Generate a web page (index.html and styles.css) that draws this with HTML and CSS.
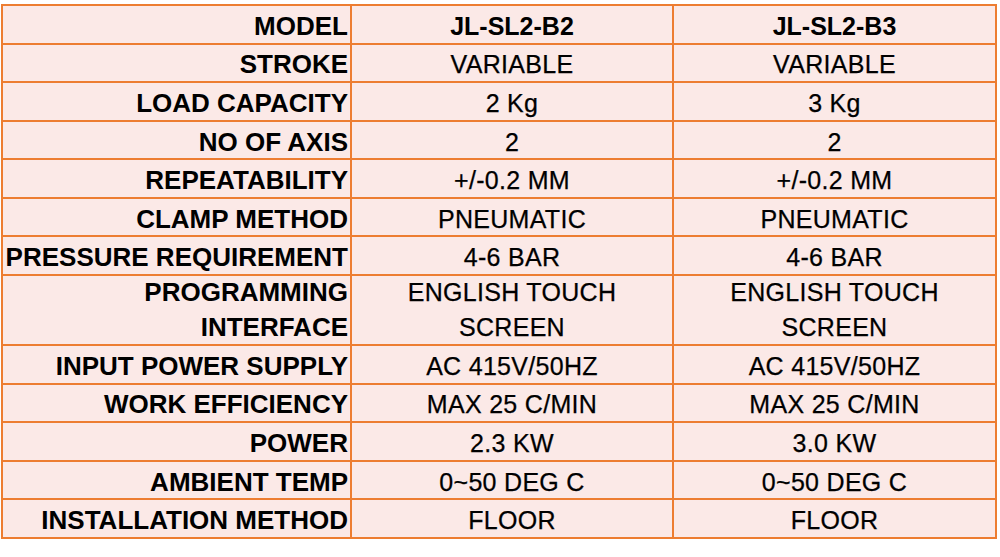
FILE: index.html
```html
<!DOCTYPE html>
<html lang="en">
<head>
<meta charset="utf-8">
<title>Specifications</title>
<link rel="stylesheet" href="styles.css">
</head>
<body>
<div class="spec">
  <div class="lbl">MODEL</div><div class="val head">JL-SL2-B2</div><div class="val head">JL-SL2-B3</div>
  <div class="lbl">STROKE</div><div class="val">VARIABLE</div><div class="val">VARIABLE</div>
  <div class="lbl">LOAD CAPACITY</div><div class="val">2 Kg</div><div class="val">3 Kg</div>
  <div class="lbl">NO OF AXIS</div><div class="val">2</div><div class="val">2</div>
  <div class="lbl">REPEATABILITY</div><div class="val">+/-0.2 MM</div><div class="val">+/-0.2 MM</div>
  <div class="lbl">CLAMP METHOD</div><div class="val">PNEUMATIC</div><div class="val">PNEUMATIC</div>
  <div class="lbl">PRESSURE REQUIREMENT</div><div class="val">4-6 BAR</div><div class="val">4-6 BAR</div>
  <div class="lbl two">PROGRAMMING<br>INTERFACE</div><div class="val two">ENGLISH TOUCH<br>SCREEN</div><div class="val two">ENGLISH TOUCH<br>SCREEN</div>
  <div class="lbl">INPUT POWER SUPPLY</div><div class="val">AC 415V/50HZ</div><div class="val">AC 415V/50HZ</div>
  <div class="lbl">WORK EFFICIENCY</div><div class="val">MAX 25 C/MIN</div><div class="val">MAX 25 C/MIN</div>
  <div class="lbl">POWER</div><div class="val">2.3 KW</div><div class="val">3.0 KW</div>
  <div class="lbl">AMBIENT TEMP</div><div class="val">0~50 DEG C</div><div class="val">0~50 DEG C</div>
  <div class="lbl">INSTALLATION METHOD</div><div class="val">FLOOR</div><div class="val">FLOOR</div>
</div>
</body>
</html>
```
FILE: styles.css
```css
html, body {
  margin: 0;
  padding: 0;
  background: #ffffff;
}
body {
  padding: 4px 0 0 1px;
  font-family: "Liberation Sans", Arial, sans-serif;
  color: #000;
}
.spec {
  width: 996px;
  height: 535px;
  box-sizing: border-box;
  display: grid;
  grid-template-columns: 347px 320px 1fr;
  grid-template-rows: repeat(7, 1fr) 68px repeat(5, 1fr);
  gap: 2px;
  padding: 2px;
  background: #ED7D31;
}
.spec > div {
  background: #FBE9E7;
  display: flex;
  flex-direction: column;
  justify-content: center;
  padding-top: 4px;
  box-sizing: border-box;
  white-space: nowrap;
}
.spec > div.two {
  padding-top: 0;
  line-height: 35px;
}
.lbl {
  font-weight: 700;
  font-size: 26px;
  text-align: right;
  padding-right: 2px;
  align-items: flex-end;
}
.val {
  font-size: 25px;
  letter-spacing: 0.3px;
  -webkit-text-stroke: 0.25px #000;
  text-align: center;
  align-items: center;
}
.val.head {
  font-weight: 700;
  font-size: 25px;
  letter-spacing: 0;
  -webkit-text-stroke: 0;
}
```
